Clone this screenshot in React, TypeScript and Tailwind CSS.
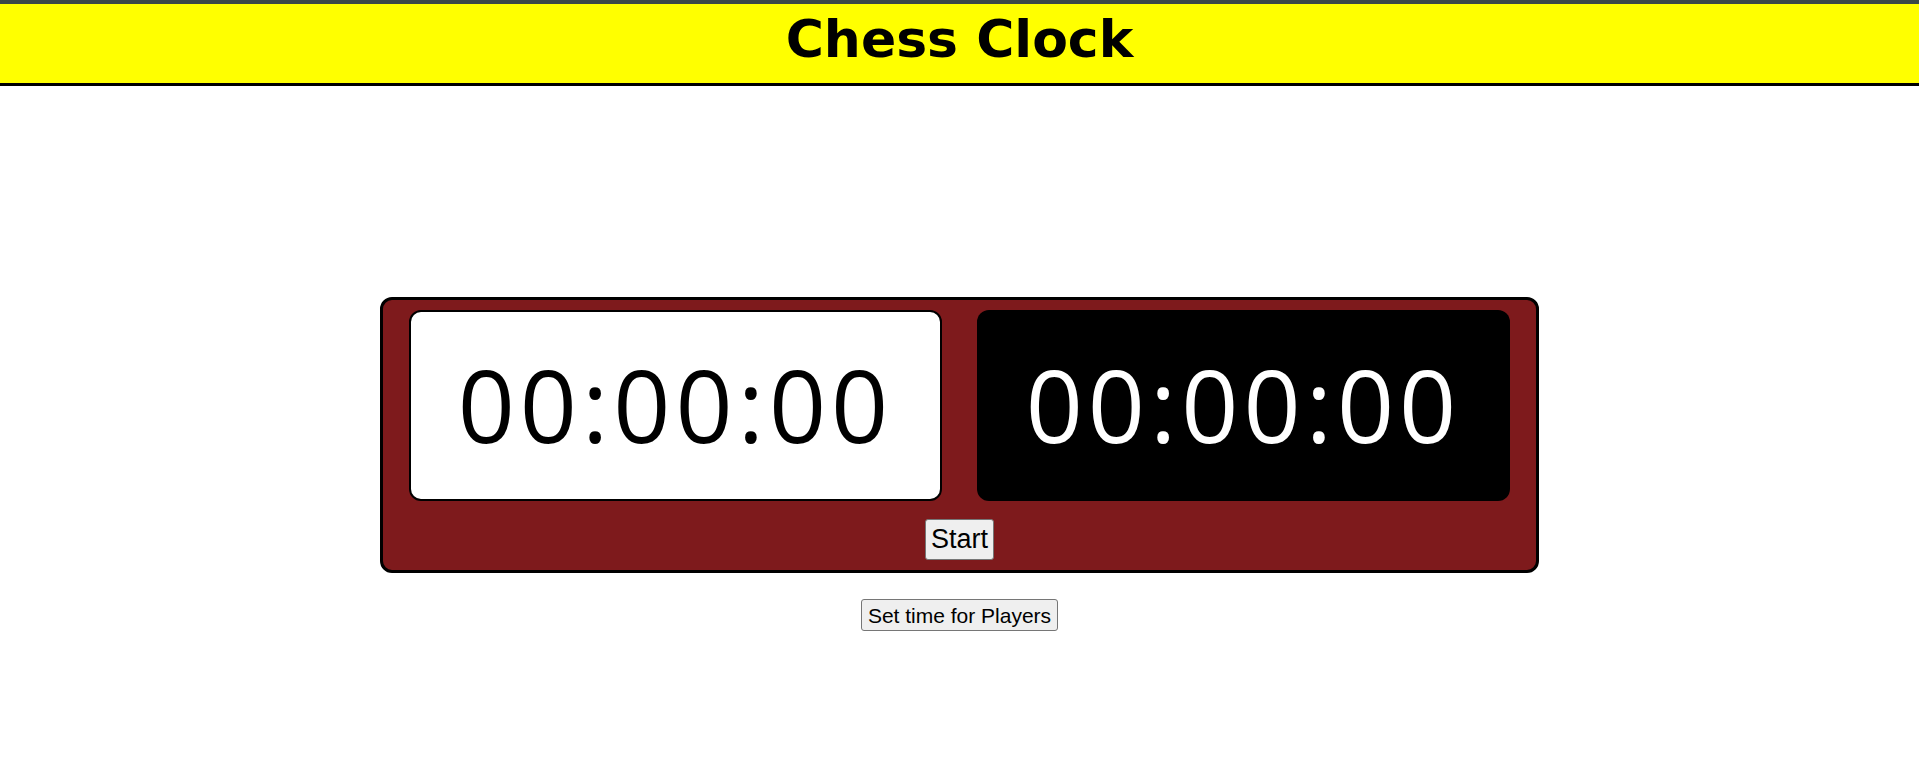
import { useState } from 'react';

function Clock({ dark }: { dark?: boolean }) {
  return (
    <div
      className={
        dark
          ? 'w-[533px] h-[191px] rounded-xl bg-black text-white flex items-center justify-center'
          : 'w-[533px] h-[191px] rounded-xl bg-white text-black border-2 border-black flex items-center justify-center'
      }
    >
      <span className="font-['Open_Sans',sans-serif] text-[100px] leading-none tracking-[5px] pb-[4px]">
        00:00:00
      </span>
    </div>
  );
}

export default function App() {
  const [running, setRunning] = useState(false);

  return (
    <div className="min-h-[759px] bg-white font-['Liberation_Sans',Arial,sans-serif]">
      {/* header */}
      <header className="border-t-4 border-[#3b4848] bg-[#ffff00] border-b-[3px] border-b-black h-[86px] flex items-center justify-center">
        <h1 className="font-['DejaVu_Sans',Verdana,sans-serif] font-bold text-[52px] leading-none text-black pb-[10px]">
          Chess Clock
        </h1>
      </header>

      <main className="flex flex-col items-center pt-[211px]">
        {/* clock body */}
        <div className="w-[1159px] h-[276px] rounded-[12px] border-[3px] border-black bg-[#7e1a1c] px-[26px] pt-[10px] flex flex-col items-center">
          <div className="flex gap-[35px]">
            <Clock />
            <Clock dark />
          </div>
          <button
            onClick={() => setRunning(!running)}
            className="mt-[18px] h-[41px] px-[5px] bg-[#efefef] border border-[#767676] rounded-[3px] text-[27px] leading-none text-black"
          >
            {running ? 'Stop' : 'Start'}
          </button>
        </div>

        <button className="mt-[26px] h-[32px] px-[6px] bg-[#efefef] border border-[#767676] rounded-[3px] text-[21px] leading-none text-black">
          Set time for Players
        </button>
      </main>
    </div>
  );
}
